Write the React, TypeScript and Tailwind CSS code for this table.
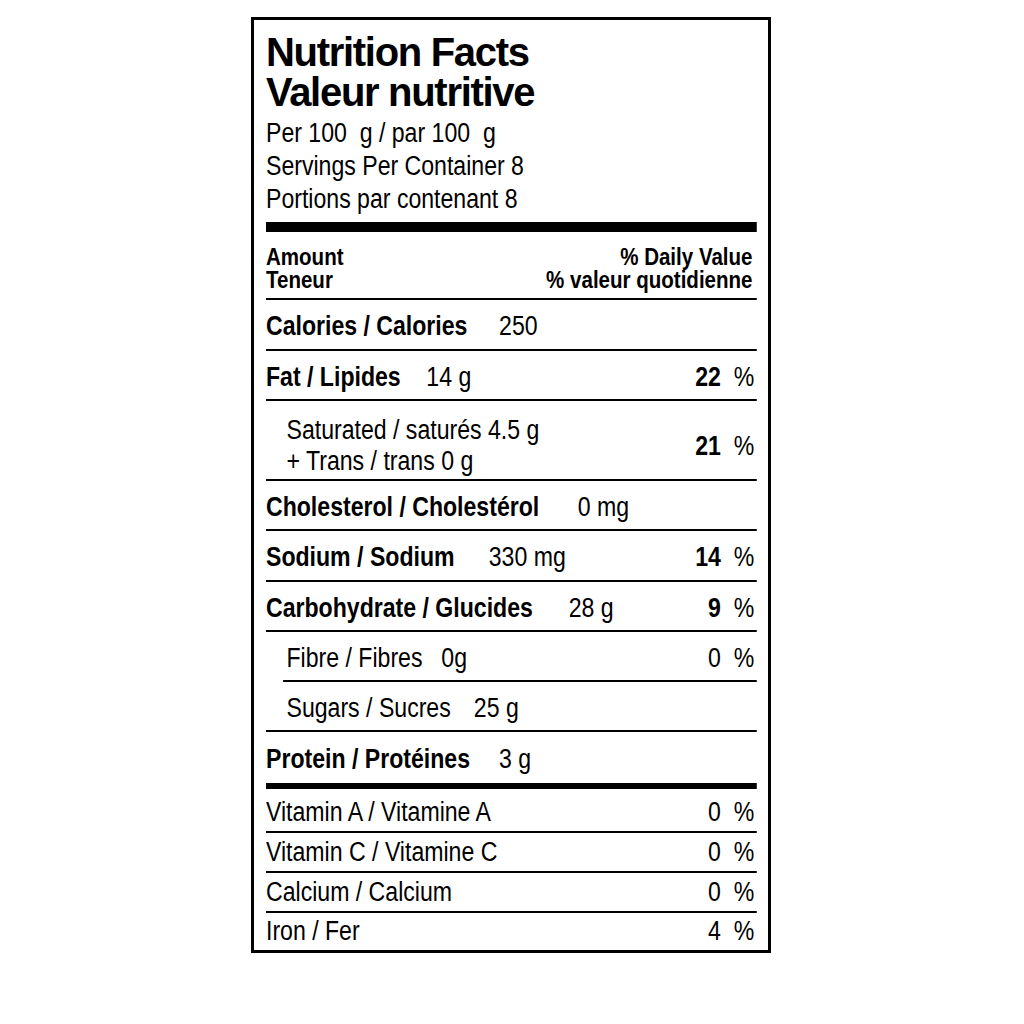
import React from 'react';

// texte condensé : Liberation Sans compressé horizontalement (pas de police narrow installée)
const body = "font-['Liberation_Sans',Arial,sans-serif]";

type RowProps = {
  label: string;
  value?: string;
  gap?: string;
  dv?: string;
  bold?: boolean;
  dvBold?: boolean;
  indent?: boolean;
  h: string;
  pt?: string;
  border?: string;
  className?: string;
};

function Row({ label, value, gap = 'ml-8', dv, bold, dvBold = true, indent, h, pt = 'pt-[4px]', border = 'border-b-2', className = '' }: RowProps) {
  return (
    <div className={`flex items-center justify-between border-black ${h} ${pt} ${border} ${className}`}>
      <div className={`flex items-baseline ${indent ? 'pl-[24px]' : ''}`}>
        <span className={bold ? 'font-bold' : ''}>{label}</span>
        {value && <span className={gap}>{value}</span>}
      </div>
      {dv && (
        <div className="flex items-baseline pr-[3px]">
          <span className={dvBold ? 'font-bold' : ''}>{dv}</span>
          <span className="ml-[15px]">%</span>
        </div>
      )}
    </div>
  );
}

export default function App() {
  return (
    <div className="w-[1024px] h-[1024px] bg-white pl-[251px] pt-[17px] overflow-hidden">
      <div className={`w-[520px] border-[3px] border-black pl-[12px] pr-[11px] pt-[12px] text-black ${body}`}>
        {/* titre */}
        <div className="font-bold text-[40px] leading-[40px] tracking-[-1.3px]">
          <div>Nutrition Facts</div>
          <div>Valeur nutritive</div>
        </div>

        <div className="w-[574px] origin-left scale-x-[0.855] text-[27px] leading-none">
          <div className="mt-[5px] leading-[33px]">
            <div className="whitespace-pre">Per 100  g / par 100  g</div>
            <div>Servings Per Container 8</div>
            <div>Portions par contenant 8</div>
          </div>
          <div className="mt-[6px] h-[10px] bg-black" />

          {/* en-tête */}
          <div className="flex justify-between pt-[13px] pb-[7px] border-b-2 border-black font-bold text-[24px] leading-[23px]">
            <div>
              <div>Amount</div>
              <div>Teneur</div>
            </div>
            <div className="text-right pr-[5px]">
              <div>% Daily Value</div>
              <div>% valeur quotidienne</div>
            </div>
          </div>

          <Row label="Calories / Calories" value="250" gap="ml-[37px]" bold h="h-[51px]" />
          <Row label="Fat / Lipides" value="14 g" gap="ml-[30px]" dv="22" bold h="h-[50px]" />

          {/* saturés + trans */}
          <div className="flex items-center justify-between h-[80px] pt-[12px] border-b-2 border-black">
            <div className="pl-[24px] leading-[31px]">
              <div>Saturated / saturés 4.5 g</div>
              <div>+ Trans / trans 0 g</div>
            </div>
            <div className="flex items-baseline pr-[3px]">
              <span className="font-bold">21</span>
              <span className="ml-[15px]">%</span>
            </div>
          </div>

          <Row label="Cholesterol / Cholestérol" value="0 mg" gap="ml-[45px]" bold h="h-[50px]" />
          <Row label="Sodium / Sodium" value="330 mg" gap="ml-[40px]" dv="14" bold h="h-[51px]" />
          <Row label="Carbohydrate / Glucides" value="28 g" gap="ml-[42px]" dv="9" bold h="h-[50px]" />
          <Row label="Fibre / Fibres" value="0g" gap="ml-[22px]" dv="0" dvBold={false} h="h-[50px]" className="ml-[20px] [&>div:first-child]:pl-[4px]" />
          <Row label="Sugars / Sucres" value="25 g" gap="ml-[27px]" indent h="h-[50px]" />
          <Row label="Protein / Protéines" value="3 g" gap="ml-[34px]" bold h="h-[57px]" border="border-b-[6px]" />

          <Row label="Vitamin A / Vitamine A" dv="0" dvBold={false} h="h-[44px]" />
          <Row label="Vitamin C / Vitamine C" dv="0" dvBold={false} h="h-[40px]" pt="pt-[1px]" />
          <Row label="Calcium / Calcium" dv="0" dvBold={false} h="h-[40px]" pt="pt-[1px]" />
          <Row label="Iron / Fer" dv="4" dvBold={false} h="h-[37px]" pt="pt-0" border="" />
        </div>
      </div>
    </div>
  );
}
